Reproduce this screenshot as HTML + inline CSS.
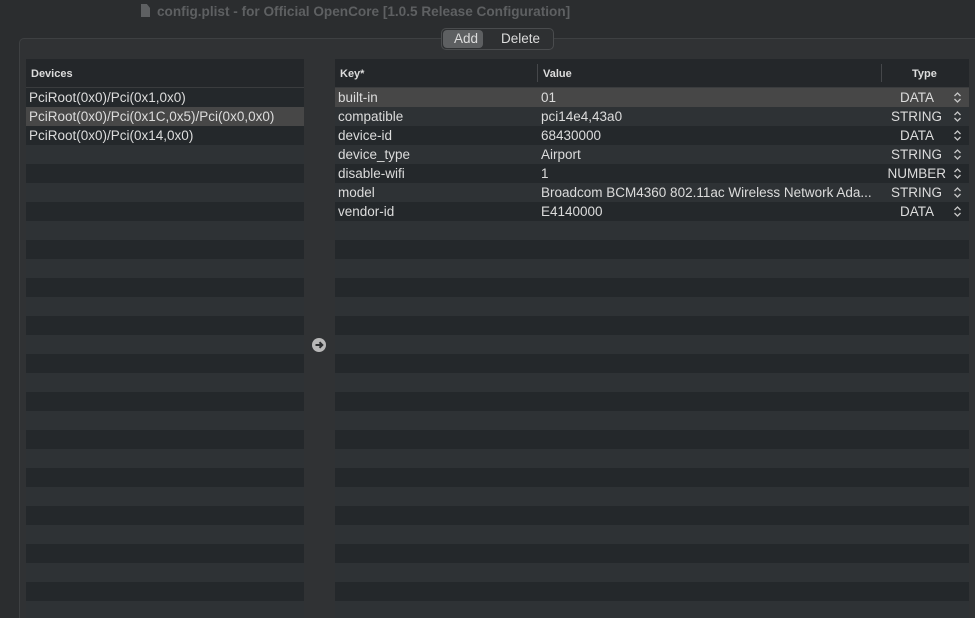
<!DOCTYPE html>
<html><head><style>
html,body{margin:0;width:975px;height:618px;overflow:hidden}
body{background:#2b2d2f;font-family:"Liberation Sans",sans-serif;color:#dcdcdc;position:relative;font-size:13.5px}
.title{position:absolute;top:4px;left:157px;font-weight:bold;font-size:13.6px;color:#5e6062}
.doc{position:absolute;left:141px;top:4px;width:9px;height:13px;background:#5e6062;clip-path:polygon(0 0,65% 0,100% 30%,100% 100%,0 100%)}
.frame{position:absolute;left:19px;top:38px;width:960px;height:600px;border:1px solid #3e4042;border-radius:5px;background:#303234}
.seg{position:absolute;left:441px;top:28px;width:111px;height:20px;border:1px solid #4a4c4e;border-radius:5px;background:#2e3032;font-size:13.5px}
.seg span{position:absolute;top:2px}
.add{position:absolute;left:1px;top:1px;width:40px;height:18px;background:#5d5f61;border-radius:4px}
.panel{position:absolute;top:59px;bottom:0;overflow:hidden}
.hdr{height:28px;background:#24272a;border-bottom:1px solid #3a3c3e;font-size:11px;font-weight:bold;color:#dcdcdc;position:relative}
.hdr span{position:absolute;top:9px}
.row{height:19px;position:relative;line-height:19px;white-space:nowrap}
.row:nth-child(odd){background:#24282b}
.row:nth-child(even){background:#2e3235}
.row.sel{background:#474747}
.row span{position:absolute}
.sepv{position:absolute;top:5px;width:1px;height:18px;background:#45474a}
.ud{position:absolute;right:7px;top:4px}
</style></head><body>
<div class="doc"></div>
<div class="title">config.plist - for Official OpenCore [1.0.5 Release Configuration]</div>
<div class="frame"></div>
<div class="seg"><div class="add"></div><span style="left:12px">Add</span><span style="left:59px">Delete</span></div>

<div class="panel" style="left:26px;width:278px">
<div class="hdr"><span style="left:5px">Devices</span></div>
<div id="L"></div>
</div>
<div style="position:absolute;left:312px;top:338px;width:14px;height:14px;border-radius:50%;background:#b8b8b8"><svg width="14" height="14" viewBox="0 0 14 14"><path d="M3.5 7H10M7.5 4.2L10.3 7 7.5 9.8" stroke="#2b2d2f" stroke-width="2" fill="none"/></svg></div>
<div class="panel" style="left:335px;width:634px">
<div class="hdr"><span style="left:5px">Key*</span><div class="sepv" style="left:202px"></div><span style="left:208px">Value</span><div class="sepv" style="left:546px"></div><span style="left:577px">Type</span></div>
<div id="R"></div>
</div>
<script>
var L=["PciRoot(0x0)/Pci(0x1,0x0)","PciRoot(0x0)/Pci(0x1C,0x5)/Pci(0x0,0x0)","PciRoot(0x0)/Pci(0x14,0x0)"];
var h="";for(var i=0;i<28;i++){h+='<div class="row'+(i==1?' sel':'')+'"><span style="left:3px">'+(L[i]||"")+'</span></div>'}
document.getElementById("L").innerHTML=h;
var ud='<svg class="ud" width="9" height="11" viewBox="0 0 9 11"><path d="M1.5 4L4.5 1 7.5 4M1.5 7L4.5 10 7.5 7" stroke="#c8c8c8" stroke-width="1.3" fill="none"/></svg>';
var R=[["built-in","01","DATA"],["compatible","pci14e4,43a0","STRING"],["device-id","68430000","DATA"],["device_type","Airport","STRING"],["disable-wifi","1","NUMBER"],["model","Broadcom BCM4360 802.11ac Wireless Network Ada...","STRING"],["vendor-id","E4140000","DATA"]];
h="";for(var i=0;i<28;i++){var r=R[i];h+='<div class="row'+(i==0?' sel':'')+'">'+(r?'<span style="left:3px">'+r[0]+'</span><span style="left:206px">'+r[1]+'</span><span style="right:'+(r[2]=="NUMBER"?23:(r[2]=="STRING"?27:35))+'px">'+r[2]+'</span>'+ud:'')+'</div>'}
document.getElementById("R").innerHTML=h;
</script>
</body></html>
